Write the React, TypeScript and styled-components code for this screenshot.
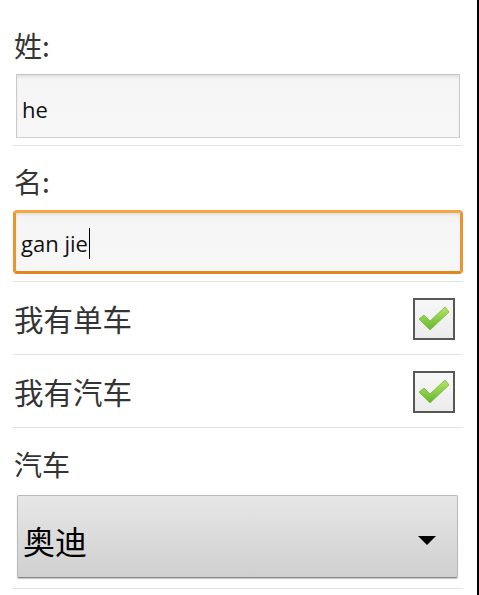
import React from "react";
import styled, { createGlobalStyle } from "styled-components";

const Global = createGlobalStyle`
  html, body { margin: 0; padding: 0; background: #fff; }
  body { font-family: "Open Sans", "Noto Sans CJK SC", sans-serif; }
`;

const Page = styled.div`
  width: 479px;
  min-height: 595px;
  box-sizing: border-box;
  border-right: 2px solid #000;
  padding: 10px 0 0 13px;
  overflow: hidden;
`;

const Form = styled.div`
  width: 450px;
  display: flex;
  flex-direction: column;
`;

const Divider = styled.div`
  height: 1px;
  background: #e2e2e2;
`;

const FieldBlock = styled.div<{ $top?: number }>`
  display: flex;
  flex-direction: column;
  gap: 9px;
  padding: ${(p) => p.$top ?? 15}px 0 7px;
`;

const Label = styled.div`
  font-family: "Noto Sans CJK SC", sans-serif;
  font-size: 28px;
  line-height: 40px;
  height: 40px;
  color: #343434;
  padding-left: 1px;
`;

const TextBox = styled.div<{ $focused?: boolean }>`
  box-sizing: border-box;
  height: 64px;
  margin: ${(p) => (p.$focused ? "0" : "0 3px")};
  border: ${(p) => (p.$focused ? "3px solid #ec9530" : "1px solid #c9c9c9")};
  border-top-color: ${(p) => (p.$focused ? "#f2a843" : "#c4c4c4")};
  border-bottom-color: ${(p) => (p.$focused ? "#e2871f" : "#cfcfcf")};
  border-radius: ${(p) => (p.$focused ? "4px" : "0")};
  background: linear-gradient(#ededed 0px, #f5f5f5 5px, #f7f7f7 100%);
  box-shadow: inset 0 2px 3px rgba(0, 0, 0, 0.05);
  display: flex;
  align-items: center;
  padding-left: 5px;
  padding-top: 6px;
  font-family: "Open Sans", sans-serif;
  font-size: 22px;
  color: #111;
`;

const Caret = styled.span`
  display: inline-block;
  width: 1px;
  height: 31px;
  background: #000;
  margin-left: 1px;
  vertical-align: middle;
  position: relative;
  top: -3px;
`;

const CheckRow = styled.div`
  height: 72px;
  display: flex;
  align-items: center;
  justify-content: space-between;
  padding-right: 8px;
`;

const RowText = styled.span`
  font-family: "Noto Sans CJK SC", sans-serif;
  font-size: 29.5px;
  color: #343434;
  padding-left: 1px;
`;

const Box = styled.div`
  box-sizing: border-box;
  width: 42px;
  height: 42px;
  border: 2px solid #575757;
  background: linear-gradient(#f7f7f7, #ececec);
  display: flex;
  align-items: center;
  justify-content: center;
  margin-top: 2px;
`;

const Spinner = styled.div`
  box-sizing: border-box;
  height: 83px;
  margin: 2px 5px 3px 4px;
  border: 1px solid #b9b9b9;
  border-bottom-color: #8a8a8a;
  border-radius: 2px;
  background: linear-gradient(#e7e7e7, #dbdbdb 50%, #d0d0d0);
  box-shadow: 0 1px 1px rgba(0, 0, 0, 0.25);
  display: flex;
  align-items: center;
  justify-content: space-between;
  padding: 7px 21px 0 5px;
`;

const SpinnerText = styled.span`
  font-family: "Noto Sans CJK SC", sans-serif;
  font-size: 32px;
  color: #000;
`;

const Check = () => (
  <svg width="32" height="26" viewBox="0 0 32 26">
    <defs>
      <linearGradient id="g" x1="0" y1="0" x2="0" y2="1">
        <stop offset="0" stopColor="#b4e664" />
        <stop offset="1" stopColor="#66b52e" />
      </linearGradient>
    </defs>
    <path
      d="M1 13 L6 9 L12 15 L27 1 L31 6 L12 24 Z"
      fill="url(#g)"
      stroke="#74bc3c"
      strokeWidth="0.8"
      strokeLinejoin="round"
    />
  </svg>
);

const Arrow = () => (
  <svg width="18" height="9" viewBox="0 0 18 9">
    <path d="M0 0 H18 L9 9 Z" fill="#000" />
  </svg>
);

export default function App() {
  return (
    <Page>
      <Global />
      <Form>
        <FieldBlock>
          <Label>姓:</Label>
          <TextBox>he</TextBox>
        </FieldBlock>
        <Divider />
        <FieldBlock>
          <Label>名:</Label>
          <TextBox $focused>
            <span>
              gan jie
              <Caret />
            </span>
          </TextBox>
        </FieldBlock>
        <Divider />
        <CheckRow>
          <RowText>我有单车</RowText>
          <Box>
            <Check />
          </Box>
        </CheckRow>
        <Divider />
        <CheckRow>
          <RowText>我有汽车</RowText>
          <Box>
            <Check />
          </Box>
        </CheckRow>
        <Divider />
        <FieldBlock $top={16}>
          <Label>汽车</Label>
          <Spinner>
            <SpinnerText>奥迪</SpinnerText>
            <Arrow />
          </Spinner>
        </FieldBlock>
        <Divider />
      </Form>
    </Page>
  );
}
